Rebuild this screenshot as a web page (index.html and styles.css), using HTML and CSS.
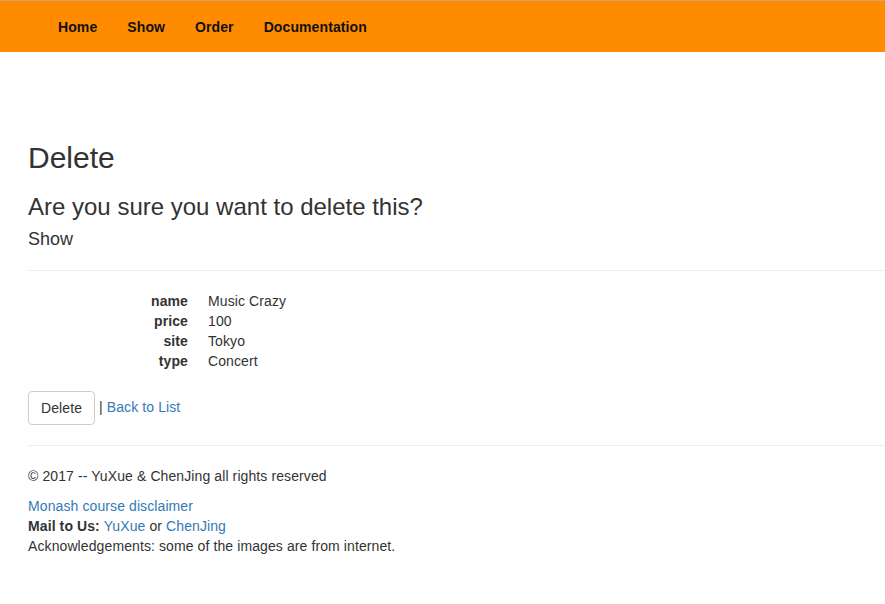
FILE: index.html
```html
<!DOCTYPE html>
<html>
<head>
<meta charset="utf-8">
<title>Delete</title>
<link rel="stylesheet" href="styles.css">
</head>
<body>
<nav class="navbar">
  <ul class="nav">
    <li><a href="#">Home</a></li>
    <li><a href="#">Show</a></li>
    <li><a href="#">Order</a></li>
    <li><a href="#">Documentation</a></li>
  </ul>
</nav>
<div class="body-content">
  <h2>Delete</h2>
  <h3>Are you sure you want to delete this?</h3>
  <div>
    <h4>Show</h4>
    <hr>
    <dl class="dl-horizontal">
      <dt>name</dt><dd>Music Crazy</dd>
      <dt>price</dt><dd>100</dd>
      <dt>site</dt><dd>Tokyo</dd>
      <dt>type</dt><dd>Concert</dd>
    </dl>
    <form class="actions">
      <button type="button" class="btn">Delete</button> | <a href="#">Back to List</a>
    </form>
  </div>
  <hr>
  <footer>
    <p>© 2017 -- YuXue &amp; ChenJing all rights reserved</p>
    <div><a href="#">Monash course disclaimer</a></div>
    <div><strong>Mail to Us:</strong> <a href="#">YuXue</a> or <a href="#">ChenJing</a></div>
    <div>Acknowledgements: some of the images are from internet.</div>
  </footer>
</div>
</body>
</html>
```

FILE: styles.css
```css
* { box-sizing: border-box; }
html, body { margin: 0; padding: 0; }
body {
  font-family: "Liberation Sans", Arial, Helvetica, sans-serif;
  font-size: 14px;
  line-height: 20px;
  color: #333;
  background: #fff;
  letter-spacing: 0.1px;
}
a { color: #337ab7; text-decoration: none; }

.navbar {
  height: 52px;
  background: #ff8c00;
  border-top: 1px solid #cfa27a;
}
.nav {
  display: flex;
  list-style: none;
  margin: 0 0 0 43px;
  padding: 0;
}
.nav a {
  display: block;
  padding: 16px 15px 15px;
  line-height: 20px;
  font-weight: bold;
  color: #111;
  letter-spacing: 0.1px;
}

.body-content {
  padding: 69px 0 20px 28px;
}
h2, h3, h4 { font-weight: 500; line-height: 1.1; color: #333; font-family: inherit; letter-spacing: 0; }
h2 { font-size: 30px; margin: 20px 0 10px; }
h3 { font-size: 24px; margin: 20px 0 10px; }
h4 { font-size: 18px; margin: 10px 0 10px; }
hr {
  margin: 20px 0;
  border: 0;
  border-top: 1px solid #eee;
  height: 0;
}
.dl-horizontal {
  display: grid;
  grid-template-columns: 160px 1fr;
  column-gap: 20px;
  margin: 0 0 20px;
}
.dl-horizontal dt {
  font-weight: bold;
  text-align: right;
}
.dl-horizontal dd { margin: 0; }
.actions { margin: 0; }
.btn {
  font-family: inherit;
  font-size: 14px;
  line-height: 20px;
  letter-spacing: 0.1px;
  padding: 6px 12px;
  color: #333;
  background: #fff;
  border: 1px solid #ccc;
  border-radius: 4px;
  vertical-align: middle;
}
footer p { margin: 0 0 10px; }
```
